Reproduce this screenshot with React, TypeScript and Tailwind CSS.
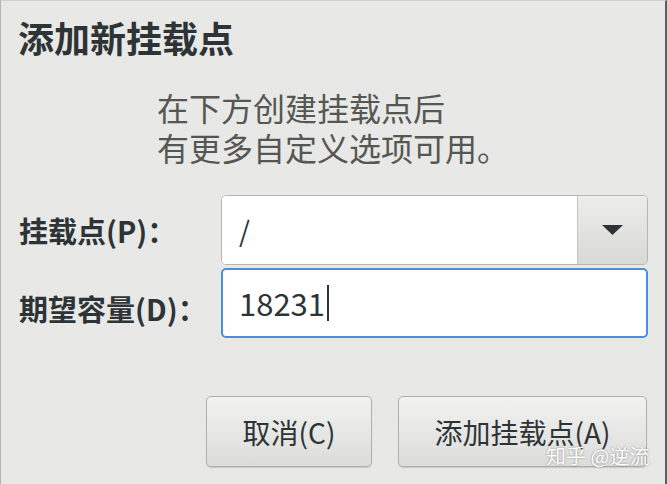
const FONT = '"Noto Sans CJK SC", "DejaVu Sans", sans-serif';

const Label = ({ text, className = "" }: { text: string; className?: string }) => (
  <div
    className={`w-[220px] shrink-0 whitespace-nowrap pl-[18px] text-[29px] font-bold leading-none text-[#2e3436] ${className}`}
  >
    {text}
  </div>
);

const DialogButton = ({ text, className = "" }: { text: string; className?: string }) => (
  <button
    className={`flex h-[71px] items-center justify-center rounded-[5px] border border-[#b0b0ad] bg-gradient-to-b from-[#f2f2f1] to-[#dcdcda] text-[28px] text-[#2e3436] shadow-[0_1px_1px_rgba(0,0,0,0.15)] ${className}`}
  >
    {text}
  </button>
);

export default function App() {
  return (
    <div
      className="relative flex h-[484px] w-[667px] flex-col overflow-hidden border-l border-r-2 border-t border-l-[#b4b4b2] border-r-[#5e5e5e] border-t-[#d0d0ce] bg-[#e8e8e7]"
      style={{ fontFamily: FONT }}
    >
      {/* Title */}
      <h1 className="pl-[17px] pt-[15px] text-[36px] font-bold leading-[42px] text-[#2e3436]">
        添加新挂载点
      </h1>

      {/* Hint */}
      <p className="mt-[29px] pl-[156px] text-[32px] leading-[40px] text-[#555753]">
        在下方创建挂载点后
        <br />
        有更多自定义选项可用。
      </p>

      {/* Mount point */}
      <div className="mt-[28px] flex items-center">
        <Label text="挂载点(P)：" />
        <div className="flex h-[70px] w-[427px] overflow-hidden rounded-[5px] border border-[#b6b6b3]">
          <div className="flex flex-1 items-center bg-white pl-[17px] text-[28px] text-[#2e3436]">/</div>
          <div className="flex w-[70px] items-center justify-center border-l border-[#c4c4c1] bg-gradient-to-b from-[#ededec] to-[#d8d8d6]">
            <svg width="21" height="10" viewBox="0 0 21 10">
              <path d="M0 0 H21 L10.5 10 Z" fill="#2e3436" />
            </svg>
          </div>
        </div>
      </div>

      {/* Size */}
      <div className="mt-[3px] flex items-center">
        <Label text="期望容量(D)：" className="mt-[10px]" />
        <div className="flex h-[70px] w-[427px] items-center rounded-[5px] border-2 border-[#4a90d9] bg-white pl-[16px] text-[31px] text-[#2e3436]">
          18231
          <span className="ml-[2px] h-[36px] w-[2px] bg-[#2e3436]" />
        </div>
      </div>

      {/* Actions */}
      <div className="mt-[58px] flex gap-[26px] pl-[205px]">
        <DialogButton text="取消(C)" className="w-[166px]" />
        <DialogButton text="添加挂载点(A)" className="w-[249px]" />
      </div>

      <span className="absolute left-[545px] top-[440px] text-[20px] text-white [text-shadow:0_0_2px_rgba(0,0,0,0.45)]">
        知乎 @逆流
      </span>
    </div>
  );
}
